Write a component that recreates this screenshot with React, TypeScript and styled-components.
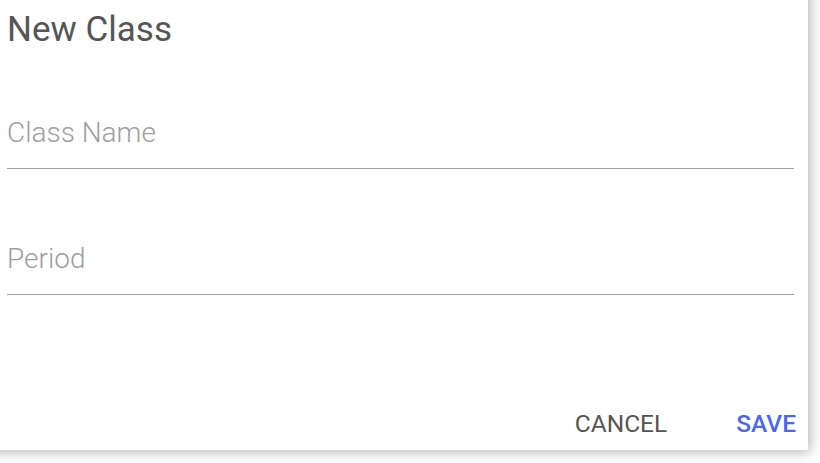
import styled, { createGlobalStyle } from 'styled-components';

const GlobalStyle = createGlobalStyle`
  html, body {
    margin: 0;
    padding: 0;
    background: #ffffff;
    overflow: hidden;
  }
  body {
    height: 100vh;
    font-family: Roboto, 'Liberation Sans', sans-serif;
  }
`;

const App = () => {
  return (
    <>
      <GlobalStyle />
      <Dialog>
        <Title>New Class</Title>
        <Field height={118}>
          <Input placeholder="Class Name" />
        </Field>
        <Field height={125}>
          <Input placeholder="Period" />
        </Field>
        <Actions>
          <ActionButton>CANCEL</ActionButton>
          <ActionButton primary>SAVE</ActionButton>
        </Actions>
      </Dialog>
    </>
  );
};

const Dialog = styled.div`
  box-sizing: border-box;
  display: flex;
  flex-direction: column;
  width: 828px;
  height: 470px;
  margin: -20px 0 0 -20px;
  padding: 30px 14px 8px 27px;
  background: #ffffff;
  box-shadow: 0 0 12px 2px rgba(0, 0, 0, 0.3);
`;

const Title = styled.h3`
  margin: 0;
  font-size: 35px;
  line-height: 40px;
  font-weight: 400;
  color: #555555;
`;

const Field = styled.div<{ height: number }>`
  display: flex;
  flex-direction: column;
  justify-content: flex-end;
  height: ${({ height }) => height}px;
  border-bottom: 1px solid #9e9e9e;
`;

const Input = styled.input`
  height: 34px;
  margin: 0 0 19px;
  padding: 0;
  border: none;
  outline: none;
  background: transparent;
  font-family: Roboto, 'Liberation Sans', sans-serif;
  font-size: 28px;
  font-weight: 300;
  color: #333333;
  &::placeholder {
    color: #9e9e9e;
  }
`;

const Actions = styled.div`
  display: flex;
  justify-content: flex-end;
  gap: 69px;
  margin: auto -2px 0 0;
`;

const ActionButton = styled.button<{ primary?: boolean }>`
  height: 36px;
  padding: 0;
  border: none;
  background: transparent;
  font-family: Roboto, 'Liberation Sans', sans-serif;
  font-size: 24.5px;
  line-height: 36px;
  font-weight: ${({ primary }) => (primary ? 500 : 400)};
  color: ${({ primary }) => (primary ? '#4b67f0' : '#555555')};
  cursor: pointer;
`;

export default App;
